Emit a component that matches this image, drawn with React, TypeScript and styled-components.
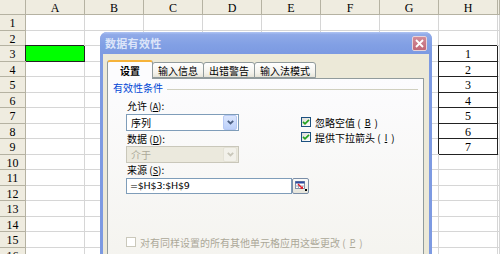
import React from "react";
import styled, { createGlobalStyle } from "styled-components";

const GlobalStyle = createGlobalStyle`
  html, body {
    margin: 0;
    padding: 0;
    background: #ffffff;
    overflow: hidden;
  }
  * {
    box-sizing: border-box;
  }
`;

const Page = styled.div`
  position: relative;
  width: 500px;
  height: 254px;
  overflow: hidden;
`;

// ---- spreadsheet ----

const Sheet = styled.div<{ $rows: string }>`
  display: grid;
  grid-template-columns: 26px repeat(8, 59px) 1fr;
  grid-template-rows: ${({ $rows }) => $rows};
  font-family: "Liberation Serif", "DejaVu Serif", serif;
  font-size: 12px;
  color: #000;
`;

type CellKind = "corner" | "colhead" | "rowhead" | "data";

const Cell = styled.div<{ $kind: CellKind; $fill?: string; $boxed?: boolean }>`
  position: relative;
  display: flex;
  align-items: center;
  justify-content: center;
  line-height: 1;
  background: ${({ $kind, $fill }) =>
    $kind === "data" ? $fill || "#ffffff" : "#efece0"};
  border-right: 1px solid
    ${({ $kind, $boxed }) => ($boxed ? "#222" : $kind === "data" ? "#d6d6d6" : "#b5b2a2")};
  border-bottom: 1px solid
    ${({ $kind, $boxed }) => ($boxed ? "#222" : $kind === "data" ? "#d6d6d6" : "#b5b2a2")};
  box-shadow: ${({ $boxed }) => ($boxed ? "-1px -1px 0 0 #222" : "none")};
  z-index: ${({ $boxed }) => ($boxed ? 1 : 0)};
  padding-top: 1px;
`;

// ---- dialog ----

const Window = styled.div`
  position: absolute;
  left: 100px;
  top: 32px;
  width: 332px;
  height: 240px;
  display: flex;
  flex-direction: column;
  background: #7d9ae2;
  border-radius: 7px 7px 0 0;
  font-family: "Noto Sans CJK SC", "Noto Sans", sans-serif;
  font-size: 10px;
  color: #000;
`;

const TitleBar = styled.div`
  height: 22px;
  flex: none;
  display: flex;
  align-items: center;
  justify-content: space-between;
  padding: 0 5px 0 5px;
  border-radius: 7px 7px 0 0;
  background: linear-gradient(180deg, #b1c5f3 0%, #90aae8 12%, #819fe4 60%, #7c9ae2 100%);
`;

const Title = styled.span`
  font-size: 11px;
  font-weight: 700;
  color: #dce5f9;
  letter-spacing: 0.3px;
`;

const CloseButton = styled.div`
  width: 15px;
  height: 15px;
  border: 1px solid #e8d3d9;
  border-radius: 2px;
  background: linear-gradient(180deg, #d38d99 0%, #c06878 100%);
  display: flex;
  align-items: center;
  justify-content: center;
`;

const Body = styled.div`
  flex: 1;
  margin: 0 3px;
  background: #ece9d8;
  padding: 6px 5px 0 4px;
  display: flex;
  flex-direction: column;
`;

const TabRow = styled.div`
  display: flex;
  align-items: flex-end;
  height: 18px;
  flex: none;
`;

const Tab = styled.div<{ $active?: boolean }>`
  height: ${({ $active }) => ($active ? "19px" : "16px")};
  margin-bottom: ${({ $active }) => ($active ? "-1px" : "0")};
  padding: ${({ $active }) => ($active ? "0 12px" : "0 5px")};
  margin-left: ${({ $active }) => ($active ? "0" : "-1px")};
  display: flex;
  align-items: center;
  border: 1px solid #919b9c;
  border-bottom: ${({ $active }) => ($active ? "none" : "1px solid #919b9c")};
  border-top: ${({ $active }) => ($active ? "2px solid #f6b33a" : "1px solid #919b9c")};
  border-radius: 3px 3px 0 0;
  background: ${({ $active }) =>
    $active ? "#fcfcfe" : "linear-gradient(180deg, #ffffff 0%, #f3f2ec 70%, #e6e4d8 100%)"};
  font-weight: ${({ $active }) => ($active ? 600 : 400)};
  position: relative;
  z-index: ${({ $active }) => ($active ? 2 : 1)};
  white-space: nowrap;
`;

const Pane = styled.div`
  flex: 1;
  border: 1px solid #919b9c;
  background: linear-gradient(180deg, #fcfcfe 0%, #f4f3ee 100%);
  padding: 3px 5px 0 5px;
  display: flex;
  flex-direction: column;
`;

const GroupHeader = styled.div`
  display: flex;
  align-items: center;
  gap: 4px;
  height: 12px;
  line-height: 12px;
  color: #0046d5;
  &::after {
    content: "";
    flex: 1;
    height: 1px;
    margin-top: 2px;
    background: #d0d0bf;
  }
`;

const Fields = styled.div`
  padding-left: 13px;
  margin-top: 6px;
  display: flex;
  flex-direction: column;
`;

const TopRow = styled.div`
  display: flex;
`;

const LeftColumn = styled.div`
  width: 113px;
  display: flex;
  flex-direction: column;
`;

const RightColumn = styled.div`
  margin-left: 62px;
  padding-top: 16px;
  display: flex;
  flex-direction: column;
  gap: 3px;
`;

const Label = styled.div<{ $gap?: number }>`
  height: 12px;
  line-height: 12px;
  padding-left: 1px;
  margin-top: ${({ $gap }) => $gap ?? 0}px;
  white-space: nowrap;
`;

const Select = styled.div<{ $disabled?: boolean; $gap?: number }>`
  height: 17px;
  margin-top: ${({ $gap }) => $gap ?? 0}px;
  display: flex;
  align-items: stretch;
  border: 1px solid ${({ $disabled }) => ($disabled ? "#c9c7ba" : "#7f9db9")};
  background: ${({ $disabled }) => ($disabled ? "#ebe9dd" : "#ffffff")};
  color: ${({ $disabled }) => ($disabled ? "#aca899" : "#000")};
`;

const SelectText = styled.span`
  flex: 1;
  padding-left: 4px;
  line-height: 15px;
`;

const DropButton = styled.div<{ $disabled?: boolean }>`
  width: 14px;
  margin-right: 1px;
  display: flex;
  align-items: center;
  justify-content: center;
  border: 1px solid ${({ $disabled }) => ($disabled ? "#e4e2d6" : "#b7c9f4")};
  border-radius: 2px;
  background: ${({ $disabled }) =>
    $disabled ? "#f2f1ea" : "linear-gradient(180deg, #dbe6fd 0%, #bcd0fa 100%)"};
`;

const InputRow = styled.div`
  display: flex;
  height: 16px;
  margin-top: 2px;
`;

const TextInput = styled.div`
  width: 166px;
  border: 1px solid #7f9db9;
  background: #ffffff;
  padding-left: 3px;
  line-height: 14px;
  font-family: "DejaVu Sans", "Noto Sans", sans-serif;
  font-size: 9.5px;
  letter-spacing: -0.2px;
`;

const RefButton = styled.div`
  width: 17px;
  border: 1px solid #7a8ea8;
  border-radius: 2px;
  background: linear-gradient(180deg, #fbfbf9 0%, #e6e4da 100%);
  display: flex;
  align-items: center;
  justify-content: center;
`;

const CheckRow = styled.div<{ $disabled?: boolean; $gap?: number }>`
  display: flex;
  align-items: center;
  gap: 4px;
  height: 12px;
  margin-top: ${({ $gap }) => $gap ?? 0}px;
  color: ${({ $disabled }) => ($disabled ? "#aca899" : "#000")};
  white-space: nowrap;
`;

const Box = styled.div<{ $disabled?: boolean }>`
  width: 10px;
  height: 10px;
  flex: none;
  border: 1px solid ${({ $disabled }) => ($disabled ? "#cac8bb" : "#1c5180")};
  background: ${({ $disabled }) =>
    $disabled ? "#ffffff" : "linear-gradient(135deg, #dcdcd7 0%, #ffffff 100%)"};
  display: flex;
  align-items: center;
  justify-content: center;
`;

const Key = styled.span`
  text-decoration: underline;
  font-size: 9px;
`;

const Chevron: React.FC<{ color: string }> = ({ color }) => (
  <svg width="7" height="5" viewBox="0 0 7 5">
    <polyline points="0.8,0.8 3.5,3.5 6.2,0.8" fill="none" stroke={color} strokeWidth="1.8" />
  </svg>
);

const Check: React.FC = () => (
  <svg width="8" height="8" viewBox="0 0 8 8">
    <polyline points="1,3.8 3,5.8 7,1.8" fill="none" stroke="#21a121" strokeWidth="1.7" />
  </svg>
);

const RefIcon: React.FC = () => (
  <svg width="12" height="10" viewBox="0 0 12 10">
    <rect x="0.5" y="0.5" width="9" height="7" fill="#ffffff" stroke="#7f8fa8" strokeWidth="1" />
    <rect x="0.5" y="0.5" width="9" height="2" fill="#2c4a9e" />
    <line x1="3.5" y1="2.5" x2="3.5" y2="7.5" stroke="#9aa6bb" strokeWidth="1" />
    <line x1="0.5" y1="5" x2="9.5" y2="5" stroke="#9aa6bb" strokeWidth="1" />
    <polyline points="3,3 7,7" stroke="#e0202a" strokeWidth="1.4" />
    <polygon points="8,8 5,8 8,5" fill="#e0202a" />
    <rect x="10" y="8" width="2" height="2" fill="#000" />
  </svg>
);

const columns = ["A", "B", "C", "D", "E", "F", "G", "H", ""];
const rowNumbers = Array.from({ length: 16 }, (_, i) => i + 1);

const SpreadSheet: React.FC = () => {
  const rowTemplate = ["15px", ...rowNumbers.map((n) => (n % 2 ? "16px" : "15px"))].join(" ");
  return (
    <Sheet $rows={rowTemplate}>
      <Cell $kind="corner" />
      {columns.map((c, i) => (
        <Cell key={`h${i}`} $kind="colhead">
          {c}
        </Cell>
      ))}
      {rowNumbers.map((r) => (
        <React.Fragment key={r}>
          <Cell $kind="rowhead">{r}</Cell>
          {columns.map((c, i) => {
            const green = c === "A" && r === 3;
            const list = c === "H" && r >= 3 && r <= 9;
            return (
              <Cell
                key={`${r}-${i}`}
                $kind="data"
                $fill={green ? "#00ff00" : undefined}
                $boxed={green || list}
              >
                {list ? r - 2 : null}
              </Cell>
            );
          })}
        </React.Fragment>
      ))}
    </Sheet>
  );
};

const ValidationDialog: React.FC = () => (
  <Window>
    <TitleBar>
      <Title>数据有效性</Title>
      <CloseButton>
        <svg width="9" height="9" viewBox="0 0 9 9">
          <path d="M1 1 L8 8 M8 1 L1 8" stroke="#ffffff" strokeWidth="1.8" />
        </svg>
      </CloseButton>
    </TitleBar>
    <Body>
      <TabRow>
        <Tab $active>设置</Tab>
        <Tab>输入信息</Tab>
        <Tab>出错警告</Tab>
        <Tab>输入法模式</Tab>
      </TabRow>
      <Pane>
        <GroupHeader>有效性条件</GroupHeader>
        <Fields>
          <TopRow>
            <LeftColumn>
              <Label>
                允许 (<Key>A</Key>):
              </Label>
              <Select $gap={2}>
                <SelectText>序列</SelectText>
                <DropButton>
                  <Chevron color="#4d6185" />
                </DropButton>
              </Select>
              <Label $gap={2}>
                数据 (<Key>D</Key>):
              </Label>
              <Select $disabled $gap={1}>
                <SelectText>介于</SelectText>
                <DropButton $disabled>
                  <Chevron color="#c9c7ba" />
                </DropButton>
              </Select>
            </LeftColumn>
            <RightColumn>
              <CheckRow>
                <Box>
                  <Check />
                </Box>
                忽略空值 (<Key>B</Key>)
              </CheckRow>
              <CheckRow>
                <Box>
                  <Check />
                </Box>
                提供下拉箭头 (<Key>I</Key>)
              </CheckRow>
            </RightColumn>
          </TopRow>
          <Label $gap={1}>
            来源 (<Key>S</Key>):
          </Label>
          <InputRow>
            <TextInput>=$H$3:$H$9</TextInput>
            <RefButton>
              <RefIcon />
            </RefButton>
          </InputRow>
          <CheckRow $disabled $gap={42}>
            <Box $disabled />
            对有同样设置的所有其他单元格应用这些更改 (<Key>P</Key>)
          </CheckRow>
        </Fields>
      </Pane>
    </Body>
  </Window>
);

const App: React.FC = () => (
  <>
    <GlobalStyle />
    <Page>
      <SpreadSheet />
      <ValidationDialog />
    </Page>
  </>
);

export default App;
